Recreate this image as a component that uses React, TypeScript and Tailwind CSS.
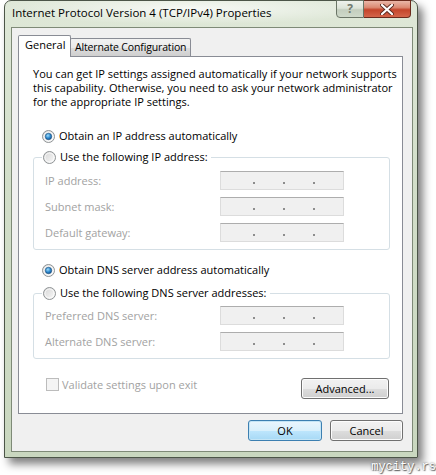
import React from "react"

const frameFont = "font-['Open_Sans','Noto_Sans',sans-serif]"

function Radio({ checked = false }: { checked?: boolean }) {
  return (
    <svg width="13" height="13" viewBox="0 0 13 13" className="shrink-0">
      <defs>
        <linearGradient id="rbFill" x1="0" y1="0" x2="1" y2="1">
          <stop offset="0" stopColor="#d4d4d4" />
          <stop offset="1" stopColor="#fbfbfb" />
        </linearGradient>
        <radialGradient id="rbDot" cx="0.4" cy="0.35" r="0.7">
          <stop offset="0" stopColor="#9fdcfb" />
          <stop offset="0.55" stopColor="#2f8bd0" />
          <stop offset="1" stopColor="#10508f" />
        </radialGradient>
      </defs>
      <circle cx="6.5" cy="6.5" r="6" fill="url(#rbFill)" stroke="#8f9395" strokeWidth="1" />
      <circle cx="6.5" cy="6.5" r="4.5" fill="none" stroke="#ffffff" strokeOpacity="0.7" strokeWidth="1" />
      {checked && <circle cx="6.5" cy="6.5" r="3.2" fill="url(#rbDot)" stroke="#1b4f7e" strokeWidth="0.6" />}
    </svg>
  )
}

function IpField() {
  return (
    <div className="w-[124px] h-[19px] bg-[#f0f0f0] border border-[#dcdcdc] border-t-[#adadad] flex items-end pb-[5px] pl-[32px] gap-[28px]">
      <span className="w-[2px] h-[2px] bg-[#8d8d8d]" />
      <span className="w-[2px] h-[2px] bg-[#8d8d8d]" />
      <span className="w-[2px] h-[2px] bg-[#8d8d8d]" />
    </div>
  )
}

function FieldRow({ label }: { label: string }) {
  return (
    <div className="flex items-center h-[19px]">
      <span className="w-[186px] pl-[11px] text-[#a2a2a2]">{label}</span>
      <IpField />
    </div>
  )
}

function WinButton({ children, focused = false, className = "" }: { children: React.ReactNode; focused?: boolean; className?: string }) {
  const look = focused
    ? "border-[#3c7fb1] bg-[linear-gradient(#eaf6fd_0%,#d9f0fc_50%,#bee6fd_51%,#a7d9f5_100%)] shadow-[inset_0_0_0_1px_#c4e5f6]"
    : "border-[#707070] bg-[linear-gradient(#f2f2f2_0%,#ebebeb_50%,#dddddd_51%,#cfcfcf_100%)] shadow-[inset_0_0_0_1px_#fcfcfc]"
  return (
    <div className={`h-[21px] rounded-[3px] border flex items-center justify-center text-black ${look} ${className}`}>
      {children}
    </div>
  )
}

function GroupLegend({ text }: { text: string }) {
  return (
    <div className="-mt-[8px] ml-[8px] flex items-center gap-[4px] h-[14px] w-fit bg-white pl-[1px] pr-[3px]">
      <Radio />
      <span className="text-black whitespace-nowrap">{text}</span>
    </div>
  )
}

export default function App() {
  return (
    <div className={`w-[436px] h-[475px] bg-white relative overflow-hidden text-[11px] leading-[14px] ${frameFont}`}>
      {/* window */}
      <div className="ml-[4px] w-[414px] h-[458px] rounded-t-[7px] border border-[#4c5548] bg-[linear-gradient(180deg,#dfe8d8_0%,#d2dec9_40%,#c9d7bf_100%)] shadow-[5px_6px_9px_rgba(0,0,0,0.5)] flex flex-col">
        {/* title bar */}
        <div className="h-[26px] shrink-0 flex justify-between items-start pl-[7px] pr-[6px] bg-[radial-gradient(ellipse_at_45%_30%,rgba(255,255,255,0.75),rgba(255,255,255,0)_60%)]">
          <div className="pt-[5px] text-[11.5px] text-black whitespace-nowrap">Internet Protocol Version 4 (TCP/IPv4) Properties</div>
          <div className="flex -mt-[1px]">
            <div className="w-[28px] h-[18px] rounded-bl-[4px] border border-[#6a7566] bg-[linear-gradient(#eef2ec_0%,#dce4d8_45%,#c3cebe_55%,#cfd9ca_100%)] flex items-center justify-center text-[12px] font-bold text-[#717a6f] leading-none">?</div>
            <div className="w-[47px] h-[18px] rounded-br-[4px] border border-l-0 border-[#6b2a1c] bg-[linear-gradient(#eab7a8_0%,#dc8a73_40%,#c4452b_55%,#d4654a_100%)] flex items-center justify-center">
              <svg width="14" height="11" viewBox="0 0 14 11">
                <path d="M2 1 L12 10 M12 1 L2 10" stroke="#5a2a20" strokeWidth="4" strokeLinecap="round" />
                <path d="M2 1 L12 10 M12 1 L2 10" stroke="#ffffff" strokeWidth="2.2" strokeLinecap="round" />
              </svg>
            </div>
          </div>
        </div>
        {/* client */}
        <div className="ml-[6px] mr-[4px] h-[425px] shrink-0 border border-[#7e8a77] bg-[#f0f0f0] pl-[6px] pr-[9px] pt-[7px]">
          {/* tabs */}
          <div className="flex items-end h-[22px] relative z-10">
            <div className="w-[53px] h-[22px] bg-white border border-b-0 border-[#898c95] rounded-t-[2px] pl-[6px] pt-[2px] text-black whitespace-nowrap">General</div>
            <div className="w-[121px] h-[18px] -ml-[1px] mb-[1px] border border-b-0 border-[#898c95] rounded-t-[2px] bg-[linear-gradient(#f2f2f2_0%,#ebebeb_50%,#dddddd_51%,#cfcfcf_100%)] pl-[4px] pt-[1px] text-[10.5px] tracking-[-0.15px] text-black whitespace-nowrap">Alternate Configuration</div>
          </div>
          {/* panel */}
          <div className="-mt-[1px] h-[358px] bg-white border border-[#898c95] pl-[14px] pr-[12px] pt-[10px]">
            <p className="text-black whitespace-nowrap">
              You can get IP settings assigned automatically if your network supports<br />
              this capability. Otherwise, you need to ask your network administrator<br />
              for the appropriate IP settings.
            </p>
            <div className="mt-[20px] ml-[9px] flex items-center gap-[4px] h-[14px]">
              <Radio checked />
              <span className="text-black">Obtain an IP address automatically</span>
            </div>
            <div className="mt-[14px] border border-[#d5dfe5] rounded-[3px] w-[357px] pb-[7px]">
              <GroupLegend text="Use the following IP address:" />
              <div className="mt-[7px] flex flex-col gap-[7px]">
                <FieldRow label="IP address:" />
                <FieldRow label="Subnet mask:" />
                <FieldRow label="Default gateway:" />
              </div>
            </div>
            <div className="mt-[13px] ml-[9px] flex items-center gap-[4px] h-[14px]">
              <Radio checked />
              <span className="text-black">Obtain DNS server address automatically</span>
            </div>
            <div className="mt-[16px] border border-[#d5dfe5] rounded-[3px] w-[357px] pb-[7px]">
              <GroupLegend text="Use the following DNS server addresses:" />
              <div className="mt-[6px] flex flex-col gap-[7px]">
                <FieldRow label="Preferred DNS server:" />
                <FieldRow label="Alternate DNS server:" />
              </div>
            </div>
            <div className="mt-[19px] flex items-start justify-between">
              <div className="ml-[13px] flex items-center gap-[3px] h-[13px]">
                <span className="w-[13px] h-[13px] border border-[#bcbcbc] bg-[#f4f4f4]" />
                <span className="text-[#a2a2a2]">Validate settings upon exit</span>
              </div>
              <WinButton className="w-[88px] mr-[1px]">Advanced...</WinButton>
            </div>
          </div>
          {/* bottom buttons */}
          <div className="mt-[6px] flex justify-end gap-[8px]">
            <WinButton focused className="w-[74px]">OK</WinButton>
            <WinButton className="w-[73px]">Cancel</WinButton>
          </div>
        </div>
      </div>
      {/* watermark */}
      <div className="absolute right-[0px] bottom-[2px] font-['Liberation_Mono',monospace] text-[12px] leading-[12px] text-white [text-shadow:0_0_2px_#555,1px_1px_1px_#666]">mycity.rs</div>
    </div>
  )
}
